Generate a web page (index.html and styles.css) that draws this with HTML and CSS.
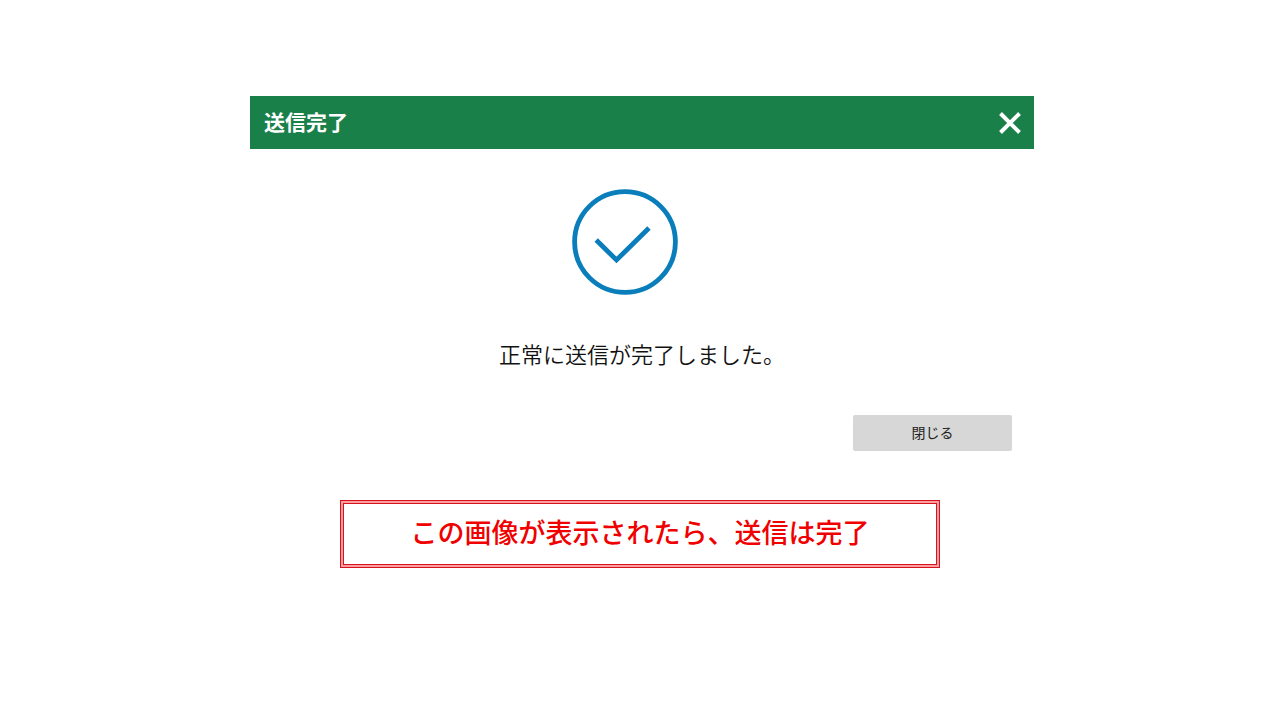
FILE: index.html
```
<!DOCTYPE html>
<html lang="ja">
<head>
    <meta charset="UTF-8">
    <meta name="viewport" content="width=device-width, initial-scale=1.0">
    <title>送信完了</title>
    <link rel="stylesheet" href="styles.css">
</head>
<body>
    <main class="container">
        <section class="dialog" role="dialog" aria-labelledby="dialogTitle">
            <div class="dialog-header">
                <h1 id="dialogTitle">送信完了</h1>
                <button class="close-icon" type="button" aria-label="閉じる">
                    <svg width="24" height="24" viewBox="0 0 24 24" fill="none" stroke="#fff" stroke-width="4">
                        <path d="M2.5 2.5 21.5 21.5M21.5 2.5 2.5 21.5"/>
                    </svg>
                </button>
            </div>
            <div class="dialog-body">
                <svg class="check" width="106" height="106" viewBox="0 0 106 106" fill="none" stroke="#0a7dbb" stroke-width="4.8">
                    <circle cx="53" cy="53" r="50.4"/>
                    <path d="M24.2 51 44.5 71 77 39"/>
                </svg>
                <p class="message">正常に送信が完了しました。</p>
            </div>
            <div class="dialog-footer">
                <button class="close-button" type="button">閉じる</button>
            </div>
        </section>

        <p class="notice">この画像が表示されたら、送信は完了</p>
    </main>
</body>
</html>
```
FILE: styles.css
```
* {
    margin: 0;
    padding: 0;
    box-sizing: border-box;
}

body {
    background-color: #fff;
    font-family: "Noto Sans CJK JP", sans-serif;
}

.container {
    display: flex;
    flex-direction: column;
    align-items: center;
    padding: 96px 16px 32px;
}

.dialog {
    width: 100%;
    max-width: 788px;
    padding-left: 4px;
}

.dialog-header {
    display: flex;
    justify-content: space-between;
    align-items: center;
    padding: 9px 12px 8px 14px;
    background-color: #1a804a;
}

.dialog-header h1 {
    padding-bottom: 4px;
    color: #fff;
    font-size: 21px;
    line-height: 32px;
}

.close-icon {
    display: flex;
    background: none;
    border: none;
    cursor: pointer;
}

.dialog-body {
    display: flex;
    flex-direction: column;
    align-items: center;
    gap: 42px;
    padding-top: 40px;
}

.check {
    margin-right: 34px;
}

.message {
    color: #111;
    font-size: 22px;
    font-weight: 350;
    line-height: 32px;
}

.dialog-footer {
    display: flex;
    justify-content: flex-end;
    padding: 46px 22px 49px;
}

.close-button {
    width: 159px;
    height: 36px;
    padding-bottom: 2px;
    background-color: #d7d7d7;
    border: none;
    border-radius: 2px;
    color: #222;
    font-family: inherit;
    font-size: 14px;
    cursor: pointer;
}

.notice {
    width: 100%;
    max-width: 600px;
    padding: 8px 16px 12px;
    border: 4px double #d41420;
    background: linear-gradient(#fff, #fff) padding-box, #ff9c9c border-box;
    color: #f00000;
    font-size: 27px;
    font-weight: 500;
    line-height: 40px;
    text-align: center;
}
```
